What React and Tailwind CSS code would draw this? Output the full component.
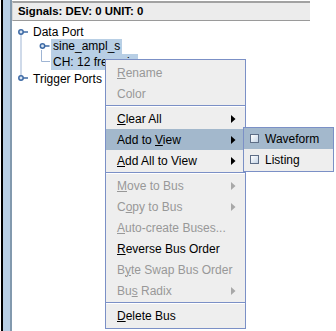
import React from "react";

const font = { fontFamily: '"Liberation Sans", Arial, sans-serif' };

function Knob({ cx, cy }) {
  return (
    <g>
      <line x1={cx + 2} y1={cy} x2={cx + 7} y2={cy} stroke="#3d6aa5" strokeWidth="1.5" />
      <circle cx={cx} cy={cy} r="2.2" fill="#dbe6f3" stroke="#3d6aa5" strokeWidth="1.5" />
    </g>
  );
}

function Arrow({ disabled }) {
  return (
    <svg width="5" height="8" viewBox="0 0 5 8">
      <path d="M0 0 L4.5 4 L0 8 Z" fill={disabled ? "#a8a8a8" : "#000"} />
    </svg>
  );
}

function Label({ text, u }) {
  if (u === undefined) return <span>{text}</span>;
  return (
    <span>
      {text.slice(0, u)}
      <u>{text[u]}</u>
      {text.slice(u + 1)}
    </span>
  );
}

function Item({ text, u, disabled, sub, active }) {
  return (
    <div
      className={`flex h-[21px] items-center justify-between pl-[11px] pr-[9px] ${
        active ? "bg-[#a3b8cc]" : ""
      } ${disabled ? "text-[#989898]" : "text-black"}`}
    >
      <Label text={text} u={u} />
      {sub && <Arrow disabled={disabled} />}
    </div>
  );
}

function Sep() {
  return (
    <div className="flex h-[4px] flex-col justify-center">
      <div className="h-px bg-[#7b90c6]" />
      <div className="h-px bg-white" />
    </div>
  );
}

function Check() {
  return (
    <div className="h-[9px] w-[9px] border border-[#5d6d86] bg-gradient-to-br from-white to-[#c6d5e6]" />
  );
}

export default function App() {
  return (
    <div className="relative flex h-[331px] w-[336px] overflow-hidden bg-white text-[12px]" style={font}>
      <div className="w-px bg-white" />
      <div className="w-[2px] bg-black" />
      <div className="w-[7px] bg-[#b8cfe5]" />
      <div className="w-[2px] bg-[#8299ae]" />
      <div className="flex flex-1 flex-col">
        <div className="mt-px flex h-[20px] w-[298px] items-center border-t-2 border-b border-l border-t-[#a2a2a2] border-b-[#9a9a9a] border-l-[#d8d8d8] bg-[#ececec] pl-[5px] text-[11.4px] font-bold text-black">
          Signals: DEV: 0 UNIT: 0
        </div>
        <div className="relative pt-[3px]">
          <svg className="absolute left-0 top-0" width="60" height="90" viewBox="0 0 60 90">
            <line x1="9" y1="12" x2="9" y2="56" stroke="#9fb5d4" strokeWidth="1" />
            <line x1="29.5" y1="29" x2="29.5" y2="40.5" stroke="#9fb5d4" strokeWidth="1" />
            <line x1="29.5" y1="40.5" x2="38" y2="40.5" stroke="#9fb5d4" strokeWidth="1" />
            <Knob cx={9} cy={11} />
            <Knob cx={30.5} cy={25} />
            <Knob cx={9} cy={57} />
          </svg>
          <div className="relative">
            <div className="flex h-[15px] items-center pl-[21px]">Data Port</div>
            <div className="flex h-[15px] items-center pl-[39px]">
              <span className="bg-[#b8cfe5] px-[2px] leading-[15px]">sine_ampl_s</span>
            </div>
            <div className="flex h-[16px] items-center pl-[39px]">
              <span className="bg-[#b8cfe5] px-[2px] leading-[16px]">CH: 12 freq_sin</span>
            </div>
            <div className="flex h-[17px] items-center pl-[21px]">Trigger Ports</div>
          </div>
        </div>
      </div>

      <div className="absolute left-[105px] top-[59px] w-[141px] border border-[#7b90c6] bg-[#eeeeee] py-[2px]">
        <Item text="Rename" u={0} disabled />
        <Item text="Color" disabled />
        <Sep />
        <Item text="Clear All" u={0} sub />
        <Item text="Add to View" u={7} sub active />
        <Item text="Add All to View" u={0} sub />
        <Sep />
        <Item text="Move to Bus" u={0} disabled sub />
        <Item text="Copy to Bus" u={1} disabled sub />
        <Item text="Auto-create Buses..." u={0} disabled />
        <Item text="Reverse Bus Order" u={0} />
        <Item text="Byte Swap Bus Order" u={1} disabled />
        <Item text="Bus Radix" u={2} disabled sub />
        <Sep />
        <Item text="Delete Bus" u={0} />
      </div>

      <div className="absolute left-[243px] top-[127px] w-[91px] border border-[#7b90c6] bg-[#eeeeee] pb-px">
        <div className="flex h-[21px] items-center gap-[6px] bg-[#a3b8cc] pl-[6px]">
          <Check />
          <span>Waveform</span>
        </div>
        <div className="flex h-[21px] items-center gap-[6px] pl-[6px]">
          <Check />
          <span>Listing</span>
        </div>
      </div>
    </div>
  );
}
